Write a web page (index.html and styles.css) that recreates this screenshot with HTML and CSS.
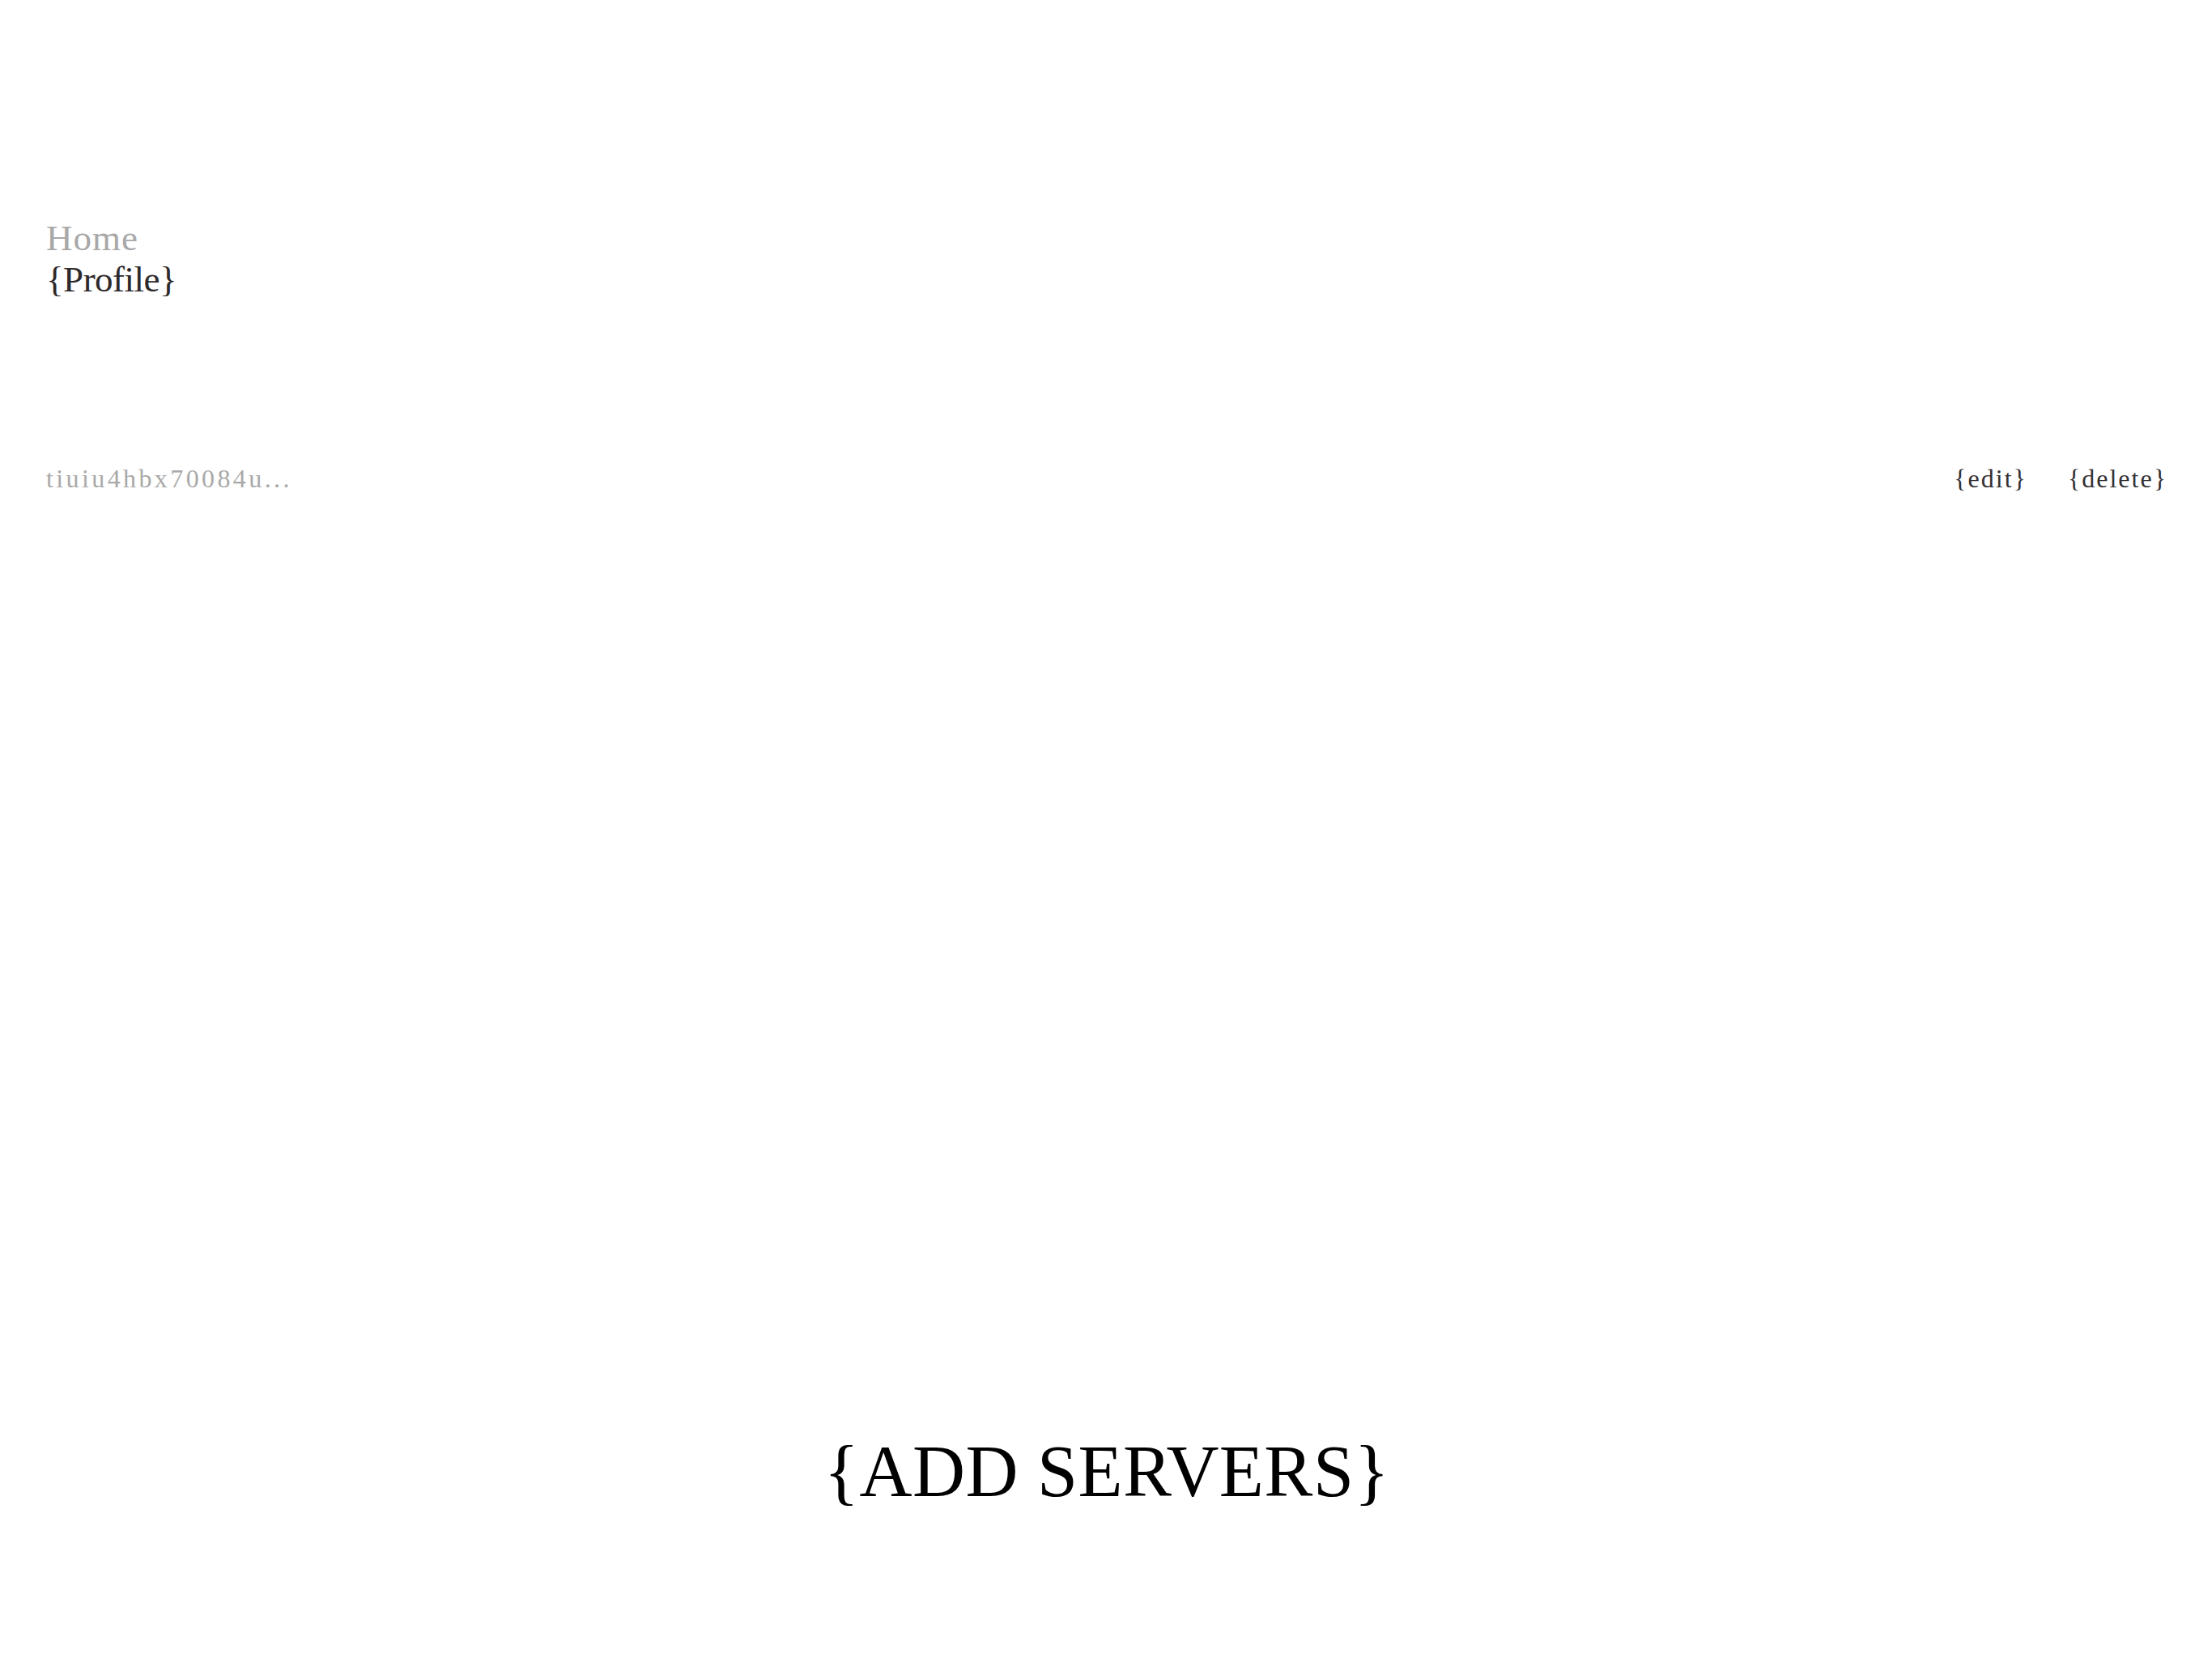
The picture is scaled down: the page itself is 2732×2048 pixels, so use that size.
FILE: index.html
```html
<!DOCTYPE html>
<html lang="en">
<head>
<meta charset="utf-8">
<title>Profile</title>
<link rel="stylesheet" href="styles.css">
</head>
<body>
<div class="page">
  <nav class="nav">
    <a class="nav-link muted" href="#">Home</a>
    <a class="nav-link current" href="#">{Profile}</a>
  </nav>
  <section class="key-row">
    <span class="key-id">tiuiu4hbx70084u...</span>
    <div class="actions">
      <a class="action" href="#">{edit}</a>
      <a class="action" href="#">{delete}</a>
    </div>
  </section>
  <div class="spacer"></div>
  <footer class="footer">
    <a class="add-servers" href="#">{ADD SERVERS}</a>
  </footer>
</div>
</body>
</html>
```

FILE: styles.css
```css
html, body {
  margin: 0;
  padding: 0;
  background: #ffffff;
}

body {
  font-family: "Liberation Serif", "Times New Roman", serif;
}

a {
  text-decoration: none;
  color: inherit;
}

.page {
  box-sizing: border-box;
  min-height: 100vh;
  padding: 269px 55px 176px 57px;
  display: flex;
  flex-direction: column;
}

.nav {
  display: flex;
  flex-direction: column;
  align-items: flex-start;
}

.nav-link {
  font-size: 45px;
  line-height: 51px;
}

.muted {
  color: #a8a8a8;
  letter-spacing: 1px;
}

.current {
  color: #2d292a;
  letter-spacing: -0.5px;
}

.key-row {
  margin-top: 200px;
  display: flex;
  justify-content: space-between;
  align-items: baseline;
  font-size: 32px;
  line-height: 40px;
}

.key-id {
  color: #a9a9a9;
  letter-spacing: 3.4px;
}

.actions {
  display: flex;
  gap: 50px;
}

.action {
  color: #333033;
  letter-spacing: 2px;
}

.spacer {
  flex: 1;
}

.footer {
  display: flex;
  justify-content: center;
}

.add-servers {
  font-size: 90px;
  line-height: 108px;
  color: #000000;
  letter-spacing: 0.5px;
}
```
